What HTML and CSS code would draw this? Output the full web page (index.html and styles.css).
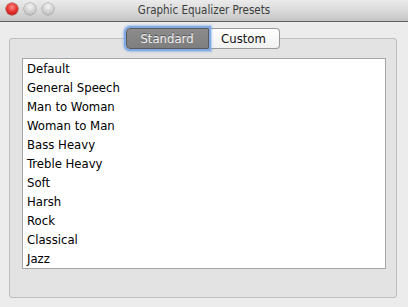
FILE: index.html
```html
<!DOCTYPE html>
<html>
<head>
<meta charset="utf-8">
<link rel="stylesheet" href="styles.css">
</head>
<body>
<div class="window">
  <div class="titlebar">
    <div class="lights">
      <span class="light red"></span>
      <span class="light grey"></span>
      <span class="light grey"></span>
    </div>
    <div class="title">Graphic Equalizer Presets</div>
  </div>
  <div class="content">
    <div class="tabbox">
      <div class="segmented">
        <div class="seg seg-selected">Standard</div>
        <div class="seg seg-plain">Custom</div>
      </div>
      <ul class="list">
        <li>Default</li>
        <li>General Speech</li>
        <li>Man to Woman</li>
        <li>Woman to Man</li>
        <li>Bass Heavy</li>
        <li>Treble Heavy</li>
        <li>Soft</li>
        <li>Harsh</li>
        <li>Rock</li>
        <li>Classical</li>
        <li>Jazz</li>
      </ul>
    </div>
  </div>
</div>
</body>
</html>
```
FILE: styles.css
```css
* { box-sizing: border-box; }
html, body { margin: 0; padding: 0; }
body {
  width: 408px;
  height: 307px;
  overflow: hidden;
  background: #ececec;
  font-family: "DejaVu Sans Condensed", "DejaVu Sans", sans-serif;
  font-size: 13px;
  color: #000;
}
.window {
  width: 408px;
  height: 307px;
  display: flex;
  flex-direction: column;
  background: #ececec;
}
.titlebar {
  height: 22px;
  flex: none;
  display: flex;
  align-items: center;
  position: relative;
  background: linear-gradient(#ebebeb, #d6d6d6 60%, #c4c4c4);
  border-bottom: 1px solid #5e5e5e;
}
.lights {
  display: flex;
  gap: 6px;
  padding-left: 6px;
  margin-top: -3px;
}
.light {
  width: 12px;
  height: 12px;
  border-radius: 50%;
  display: block;
}
.red {
  background: radial-gradient(circle at 50% 35%, #ff8b87 0%, #e3312c 50%, #b3110f 100%);
  box-shadow: 0 0 0 0.5px #9a1e1b;
}
.grey {
  background: radial-gradient(circle at 50% 30%, #f4f4f4 0%, #cfcfcf 55%, #a9a9a9 100%);
  box-shadow: 0 0 0 0.5px #8d8d8d;
}
.title {
  position: absolute;
  left: 0;
  right: 0;
  top: 3px;
  text-align: center;
  font-size: 11.5px;
  color: #3c3c3c;
  pointer-events: none;
}
.content {
  flex: 1;
  padding: 16px 11px 10px 9px;
  display: flex;
}
.tabbox {
  flex: 1;
  background: #e3e3e3;
  border: 1px solid #bdbdbd;
  border-radius: 3px;
  display: flex;
  flex-direction: column;
  align-items: center;
  padding: 0 10px 28px 12px;
}
.segmented {
  margin-top: -11px;
  margin-right: 3px;
  display: flex;
  height: 21px;
  border-radius: 4px;
}
.seg {
  height: 21px;
  line-height: 19px;
  font-size: 13px;
  text-align: center;
}
.seg-selected {
  width: 83px;
  background: linear-gradient(#8c8c8c, #7e7e7e);
  color: #f2f2f2;
  text-shadow: 0 -1px 0 #555;
  border: 1px solid #5a5a5a;
  border-radius: 4px 0 0 4px;
  box-shadow: 0 0 0 2px #80a9e6, 0 0 2px 3px rgba(110,160,230,0.5);
  position: relative;
  z-index: 1;
}
.seg-plain {
  width: 71px;
  background: linear-gradient(#ffffff, #f1f1f1);
  border: 1px solid #9a9a9a;
  border-left: none;
  border-radius: 0 4px 4px 0;
  color: #111;
}
.list {
  align-self: stretch;
  margin: 9px 0 0 0;
  padding: 0;
  list-style: none;
  background: #fff;
  border: 1px solid #a6a6a6;
  flex: 1;
}
.list li {
  height: 19px;
  line-height: 19px;
  padding-left: 4px;
  font-size: 13px;
}
```
